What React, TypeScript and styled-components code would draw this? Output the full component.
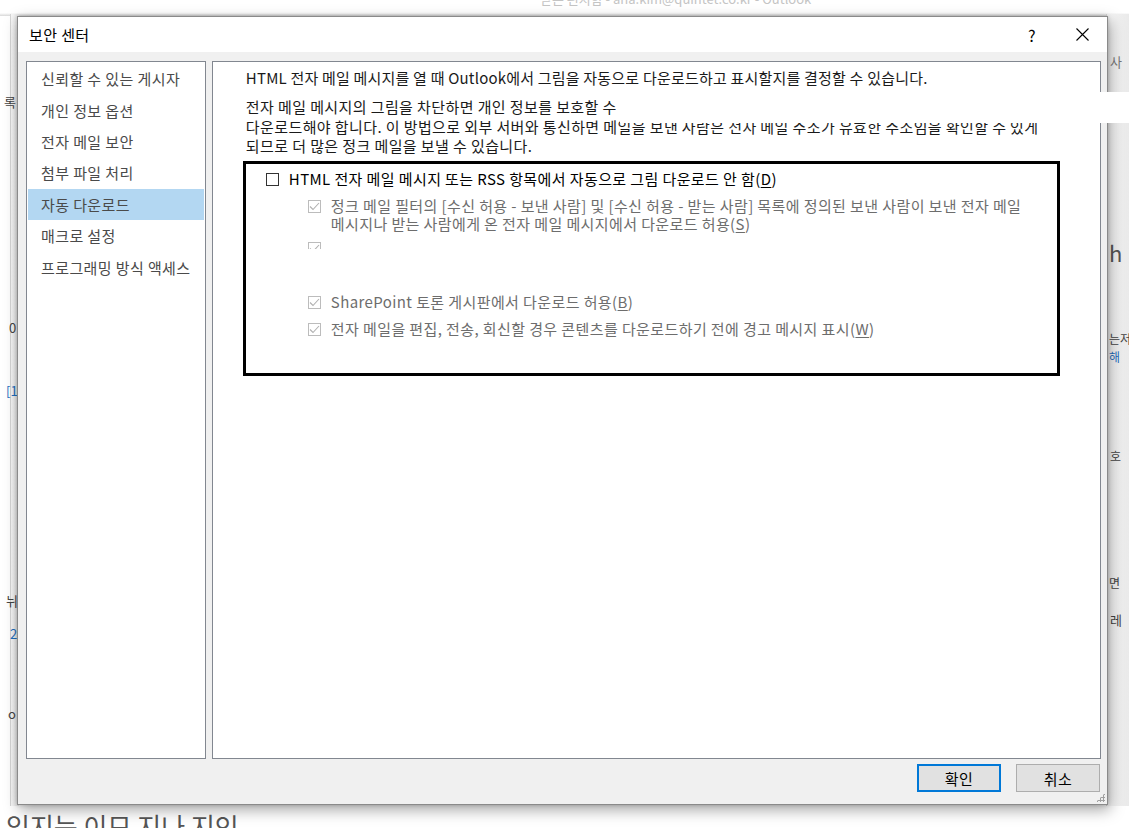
import { ReactNode } from "react";
import styled, { createGlobalStyle } from "styled-components";

const GlobalStyle = createGlobalStyle`
    html, body {
        margin: 0;
        padding: 0;
        background: #ffffff;
    }
    body {
        font-family: "Noto Sans CJK KR", "Noto Sans", sans-serif;
        font-size: 15px;
        letter-spacing: 0.4px;
        color: #1a1a1a;
    }
`

const Page = styled.div`
    position: relative;
    width: 1129px;
    height: 828px;
    overflow: hidden;
    background: #ffffff;
    padding: 16px 0 0 17px;
    box-sizing: border-box;
`

// the Outlook window behind the dialog
const Backdrop = styled.div`
    position: absolute;
    inset: 0;
    pointer-events: none;
    letter-spacing: 0;
`

const BackStrip = styled.div<{ $left: number; $width: number }>`
    position: absolute;
    top: 14px;
    bottom: 22px;
    left: ${p => p.$left}px;
    width: ${p => p.$width}px;
    background: linear-gradient(90deg, #f7f7f7, #e9e9e9);
    border-left: 1px solid #d6d6d6;
`

const BackTitle = styled.div`
    position: absolute;
    top: -11px;
    left: 540px;
    font-size: 13px;
    color: #c4c4c4;
    white-space: nowrap;
`

const BackTopLine = styled.div`
    position: absolute;
    top: 13px;
    left: 0;
    right: 0;
    height: 3px;
    background: linear-gradient(#ffffff, #d8d8d8);
`

const BackText = styled.div<{ $x: number; $y: number; $color?: string; $size?: number }>`
    position: absolute;
    left: ${p => p.$x}px;
    top: ${p => p.$y}px;
    font-size: ${p => p.$size || 13}px;
    color: ${p => p.$color || "#444"};
    white-space: nowrap;
`

const BackBottom = styled.div`
    position: absolute;
    left: 6px;
    top: 813px;
    font-size: 26px;
    line-height: 1;
    color: #555;
    white-space: nowrap;
`

const Dialog = styled.div`
    position: relative;
    width: 1091px;
    height: 789px;
    box-sizing: border-box;
    border: 1px solid #8a8a8a;
    background: #f0f0f0;
    display: flex;
    flex-direction: column;
    box-shadow: 2px 5px 14px rgba(0, 0, 0, 0.35), 0 0 4px rgba(0, 0, 0, 0.2);
`

const TitleBar = styled.div`
    height: 35px;
    background: #ffffff;
    display: flex;
    align-items: center;
    padding-left: 11px;
    flex-shrink: 0;
`

const TitleText = styled.div`
    flex-grow: 1;
    font-size: 15px;
    color: #000;
`

const TitleButton = styled.div`
    width: 50px;
    height: 35px;
    display: flex;
    align-items: center;
    justify-content: center;
    font-size: 16px;
    color: #000;
`

const Body = styled.div`
    flex-grow: 1;
    display: flex;
    gap: 6px;
    padding: 9px 6px 0 8px;
    min-height: 0;
`

const NavPanel = styled.div`
    width: 180px;
    height: 698px;
    box-sizing: border-box;
    background: #ffffff;
    border: 1px solid #828790;
    padding: 1px;
`

const NavItem = styled.div<{ $active?: boolean }>`
    height: 31.4px;
    display: flex;
    align-items: center;
    padding-left: 13px;
    color: #4a4a4a;
    background: ${p => (p.$active ? "#b3d7f2" : "transparent")};
    white-space: nowrap;
`

const ContentPanel = styled.div`
    width: 890px;
    height: 698px;
    box-sizing: border-box;
    background: #ffffff;
    border: 1px solid #828790;
    padding: 6px 0 0 30px;
`

const Intro = styled.p`
    margin: 0 0 9px 3px;
    line-height: 20px;
    letter-spacing: 0.2px;
    color: #1a1a1a;
`

const Para = styled.p`
    margin: 0 0 5px 3px;
    line-height: 19.5px;
    color: #1a1a1a;
`

const OptionBox = styled.div`
    width: 817px;
    height: 215px;
    box-sizing: border-box;
    border: 3px solid #000;
    padding: 6px 0 0 20px;
`

const OptionRow = styled.div<{ $indent?: boolean; $disabled?: boolean; $gap?: number }>`
    display: flex;
    align-items: flex-start;
    gap: 10px;
    margin-left: ${p => (p.$indent ? 42 : 0)}px;
    margin-bottom: ${p => p.$gap ?? 8}px;
    line-height: 18px;
    color: ${p => (p.$disabled ? "#6d6d6d" : "#000")};
`

const Box = styled.span<{ $checked?: boolean; $clip?: number }>`
    flex-shrink: 0;
    width: 13px;
    height: ${p => p.$clip ?? 13}px;
    margin-top: 3px;
    box-sizing: border-box;
    overflow: hidden;
    border: 1px solid ${p => (p.$checked ? "#bcbcbc" : "#333333")};
    ${p => (p.$clip ? "border-bottom: none;" : "")}
    background: #fff;
    display: flex;
    align-items: flex-start;
    justify-content: center;

    svg {
        margin-top: 1px;
        flex-shrink: 0;
    }
`

const Key = styled.span`
    text-decoration: underline;
    text-underline-offset: 2px;
`

const Footer = styled.div`
    display: flex;
    justify-content: flex-end;
    gap: 15px;
    padding: 6px 7px 12px 0;
    flex-shrink: 0;
`

const Button = styled.div<{ $primary?: boolean }>`
    width: 84px;
    height: 28px;
    box-sizing: border-box;
    display: flex;
    align-items: center;
    justify-content: center;
    background: #e1e1e1;
    border: ${p => (p.$primary ? "2px solid #0078d7" : "1px solid #adadad")};
    color: #000;
`

const Grip = styled.div`
    position: absolute;
    right: 2px;
    bottom: 2px;
    width: 9px;
    height: 9px;
    background-image: radial-gradient(circle, #a0a0a0 1px, transparent 1.2px);
    background-size: 3px 3px;
    clip-path: polygon(100% 0, 100% 100%, 0 100%);
`

// white patch that covers part of the screenshot
const Patch = styled.div<{ $x: number; $y: number; $w: number; $h: number }>`
    position: absolute;
    left: ${p => p.$x}px;
    top: ${p => p.$y}px;
    width: ${p => p.$w}px;
    height: ${p => p.$h}px;
    background: #ffffff;
`

const Check = () => (
    <svg width="11" height="9" viewBox="0 0 11 9">
        <path d="M1 4.5 L4 7.5 L10 1" fill="none" stroke="#b0b0b0" strokeWidth="1.1" />
    </svg>
)

const Option = ({ children, indent, disabled, checked, gap }: { children?: ReactNode; indent?: boolean; disabled?: boolean; checked?: boolean; gap?: number }) => (
    <OptionRow $indent={indent} $disabled={disabled} $gap={gap}>
        <Box $checked={checked}>{checked && <Check />}</Box>
        <span>{children}</span>
    </OptionRow>
)

const navItems = [
    "신뢰할 수 있는 게시자",
    "개인 정보 옵션",
    "전자 메일 보안",
    "첨부 파일 처리",
    "자동 다운로드",
    "매크로 설정",
    "프로그래밍 방식 액세스",
]

const App = () => {
    return (
        <>
            <GlobalStyle />
            <Page>
                <Backdrop>
                    <BackTitle>받은 편지함 - ana.kim@quintet.co.kr - Outlook</BackTitle>
                    <BackTopLine />
                    <BackStrip $left={10} $width={8} />
                    <BackStrip $left={1106} $width={23} />
                    <BackText $x={4} $y={92}>록</BackText>
                    <BackText $x={9} $y={318}>0</BackText>
                    <BackText $x={6} $y={381} $color="#1f6fbf">[1</BackText>
                    <BackText $x={6} $y={591}>뉘</BackText>
                    <BackText $x={10} $y={624} $color="#1f6fbf">2</BackText>
                    <BackText $x={8} $y={704}>o</BackText>
                    <BackText $x={1110} $y={52} $color="#777">사</BackText>
                    <BackText $x={1109} $y={236} $color="#555" $size={22}>h</BackText>
                    <BackText $x={1109} $y={330} $size={12}>는저</BackText>
                    <BackText $x={1109} $y={348} $color="#1f6fbf" $size={12}>해</BackText>
                    <BackText $x={1110} $y={447} $size={12}>호</BackText>
                    <BackText $x={1109} $y={574} $size={12}>면</BackText>
                    <BackText $x={1110} $y={610} $size={13}>레</BackText>
                    <BackBottom>있지는 이므 지나 지인</BackBottom>
                </Backdrop>

                <Dialog>
                    <TitleBar>
                        <TitleText>보안 센터</TitleText>
                        <TitleButton>?</TitleButton>
                        <TitleButton>
                            <svg width="13" height="13" viewBox="0 0 13 13">
                                <path d="M0.5 0.5 L12.5 12.5 M12.5 0.5 L0.5 12.5" stroke="#000" strokeWidth="1.1" />
                            </svg>
                        </TitleButton>
                    </TitleBar>

                    <Body>
                        <NavPanel>
                            {navItems.map((item, index) => (
                                <NavItem key={item} $active={index === 4}>{item}</NavItem>
                            ))}
                        </NavPanel>

                        <ContentPanel>
                            <Intro>HTML 전자 메일 메시지를 열 때 Outlook에서 그림을 자동으로 다운로드하고 표시할지를 결정할 수 있습니다.</Intro>
                            <Para>
                                전자 메일 메시지의 그림을 차단하면 개인 정보를 보호할 수<br />
                                다운로드해야 합니다. 이 방법으로 외부 서버와 통신하면 메일을 보낸 사람은 전자 메일 주소가 유효한 주소임을 확인할 수 있게<br />
                                되므로 더 많은 정크 메일을 보낼 수 있습니다.
                            </Para>
                            <OptionBox>
                                <Option gap={9}>HTML 전자 메일 메시지 또는 RSS 항목에서 자동으로 그림 다운로드 안 함(<Key>D</Key>)</Option>
                                <Option indent disabled checked gap={6}>
                                    정크 메일 필터의 [수신 허용 - 보낸 사람] 및 [수신 허용 - 받는 사람] 목록에 정의된 보낸 사람이 보낸 전자 메일<br />
                                    메시지나 받는 사람에게 온 전자 메일 메시지에서 다운로드 허용(<Key>S</Key>)
                                </Option>
                                <OptionRow $indent $disabled $gap={44}>
                                    <Box $checked $clip={7}><Check /></Box>
                                </OptionRow>
                                <Option indent disabled checked gap={9}>SharePoint 토론 게시판에서 다운로드 허용(<Key>B</Key>)</Option>
                                <Option indent disabled checked gap={0}>전자 메일을 편집, 전송, 회신할 경우 콘텐츠를 다운로드하기 전에 경고 메시지 표시(<Key>W</Key>)</Option>
                            </OptionBox>
                        </ContentPanel>
                    </Body>

                    <Footer>
                        <Button $primary>확인</Button>
                        <Button>취소</Button>
                    </Footer>
                    <Grip />
                </Dialog>

                <Patch $x={620} $y={92} $w={509} $h={31} />
            </Page>
        </>
    )
}

export default App
